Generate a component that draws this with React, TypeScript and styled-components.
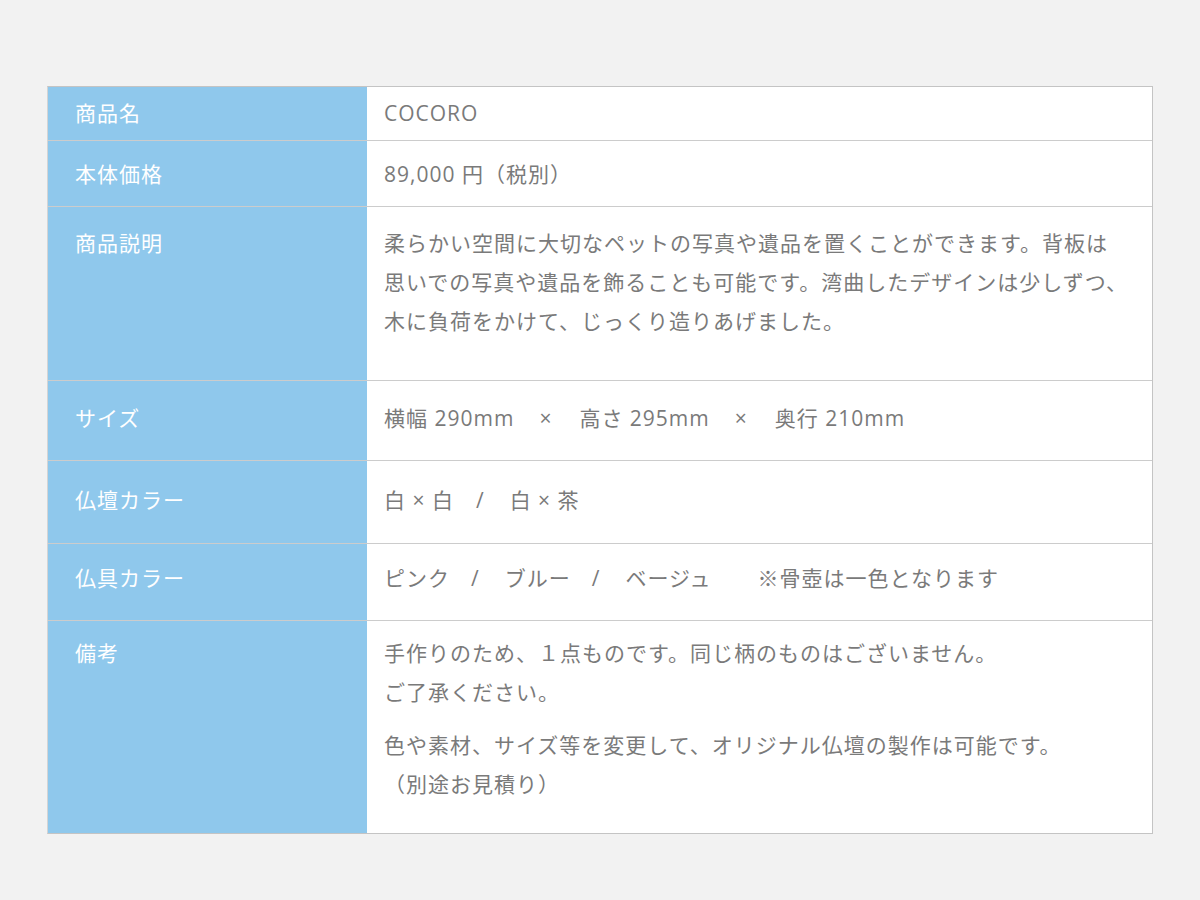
import React from "react"
import styled, { createGlobalStyle } from "styled-components"

const GlobalStyle = createGlobalStyle`
    html, body {
        margin: 0;
        padding: 0;
        background: #f2f2f2;
    }
    body {
        font-family: "Open Sans", "Noto Sans CJK JP", sans-serif;
    }
`

const Page = styled.div`
    width: 1200px;
    height: 900px;
    padding: 86px 47px 0;
    box-sizing: border-box;
`

const Table = styled.div`
    width: 1106px;
    border: 1px solid #c4c4c4;
    border-left-color: #d4d4d4;
    box-sizing: border-box;
    background: #fff;
`

const Row = styled.div`
    display: grid;
    grid-template-columns: 319px 1fr;
    border-top: 1px solid rgba(0, 0, 0, 0.2);

    &:first-child {
        border-top: none;
    }
`

const Label = styled.div<{ $pt: number; $pb: number }>`
    background: #8fc8ec;
    color: #fff;
    font-size: 21px;
    line-height: 39px;
    letter-spacing: 1px;
    padding: ${(p) => p.$pt}px 0 ${(p) => p.$pb}px 27px;
`

const Value = styled.div<{ $pt: number; $pb: number }>`
    color: #7a7a7a;
    font-size: 21px;
    line-height: 39px;
    letter-spacing: 1px;
    padding: ${(p) => p.$pt}px 20px ${(p) => p.$pb}px 17px;

    p {
        margin: 0;
    }
    p + p {
        margin-top: 14px;
    }
`

const Gap = styled.span<{ $w: number }>`
    display: inline-block;
    width: ${(p) => p.$w}px;
`

type Item = { label: string; pt: number; pb: number; body: React.ReactNode }

const items: Item[] = [
    { label: "商品名", pt: 7, pb: 7, body: "COCORO" },
    { label: "本体価格", pt: 14, pb: 12, body: "89,000 円（税別）" },
    {
        label: "商品説明",
        pt: 17,
        pb: 39,
        body: (
            <>
                柔らかい空間に大切なペットの写真や遺品を置くことができます。背板は
                <br />
                思いでの写真や遺品を飾ることも可能です。湾曲したデザインは少しずつ、
                <br />
                木に負荷をかけて、じっくり造りあげました。
            </>
        )
    },
    {
        label: "サイズ",
        pt: 18,
        pb: 22,
        body: (
            <>
                横幅 290mm<Gap $w={25} />×<Gap $w={27} />高さ 295mm<Gap $w={25} />×<Gap $w={27} />奥行 210mm
            </>
        )
    },
    {
        label: "仏壇カラー",
        pt: 20,
        pb: 23,
        body: (
            <>
                白 × 白<Gap $w={22} />/<Gap $w={25} />白 × 茶
            </>
        )
    },
    {
        label: "仏具カラー",
        pt: 15,
        pb: 22,
        body: (
            <>
                ピンク<Gap $w={21} />/<Gap $w={25} />ブルー<Gap $w={21} />/<Gap $w={25} />ベージュ<Gap $w={46} />※骨壺は一色となります
            </>
        )
    },
    {
        label: "備考",
        pt: 13,
        pb: 29,
        body: (
            <>
                <p>
                    手作りのため、１点ものです。同じ柄のものはございません。
                    <br />
                    ご了承ください。
                </p>
                <p>
                    色や素材、サイズ等を変更して、オリジナル仏壇の製作は可能です。
                    <br />
                    （別途お見積り）
                </p>
            </>
        )
    }
]

export default function App() {
    return (
        <>
            <GlobalStyle />
            <Page>
                <Table>
                    {items.map((it) => (
                        <Row key={it.label}>
                            <Label $pt={it.pt} $pb={it.pb}>
                                {it.label}
                            </Label>
                            <Value $pt={it.pt} $pb={it.pb}>
                                {it.body}
                            </Value>
                        </Row>
                    ))}
                </Table>
            </Page>
        </>
    )
}
